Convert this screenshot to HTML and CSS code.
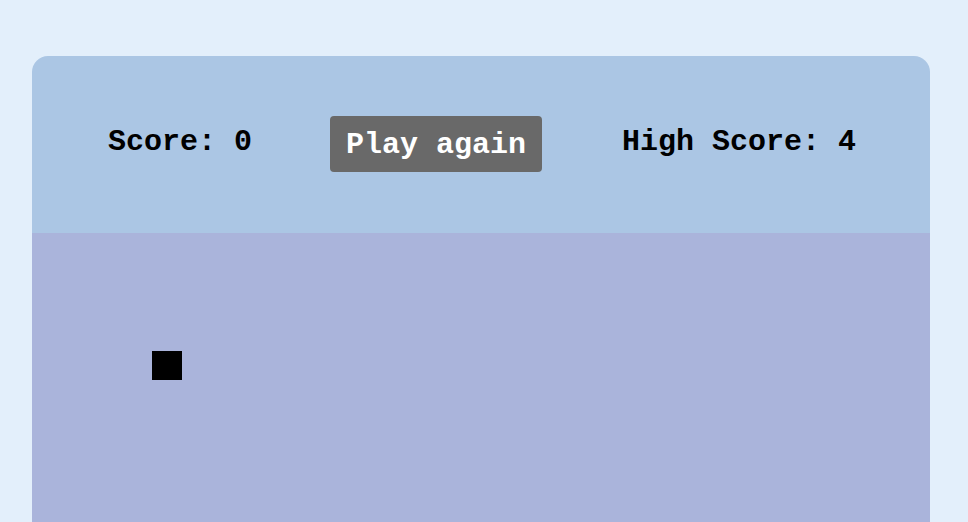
FILE: index.html
```html
<!DOCTYPE html>
<html lang="en">
<head>
<meta charset="utf-8">
<title>Snake</title>
<link rel="stylesheet" href="styles.css">
</head>
<body>
<main class="game">
  <header class="bar">
    <span class="score">Score: 0</span>
    <button class="again">Play again</button>
    <span class="score high">High Score: 4</span>
  </header>
  <section class="board">
    <div class="cell" style="left:120px;top:118px"></div>
  </section>
</main>
</body>
</html>
```
FILE: styles.css
```css
html, body {
  margin: 0;
  padding: 0;
}
body {
  background: #e3effb;
  font-family: "Liberation Mono", "Courier New", monospace;
  padding: 56px 38px 0 32px;
  overflow: hidden;
  height: 522px;
  box-sizing: border-box;
}
.game {
  border-radius: 16px 16px 0 0;
  overflow: hidden;
}
.bar {
  height: 177px;
  background: #abc6e4;
  display: flex;
  align-items: center;
  padding-left: 76px;
}
.score {
  font-size: 30px;
  font-weight: bold;
  color: #000;
  line-height: 34px;
  margin-top: -6px;
}
.score.high {
  margin-left: 80px;
}
.again {
  font-family: inherit;
  font-size: 30px;
  font-weight: bold;
  color: #fff;
  background: #696969;
  border: none;
  border-radius: 4px;
  padding: 12px 16px 10px;
  margin-top: -2px;
  margin-left: 78px;
  line-height: 34px;
}
.board {
  position: relative;
  height: 289px;
  background: #aab4db;
}
.cell {
  position: absolute;
  width: 30px;
  height: 29px;
  background: #000;
}
```
